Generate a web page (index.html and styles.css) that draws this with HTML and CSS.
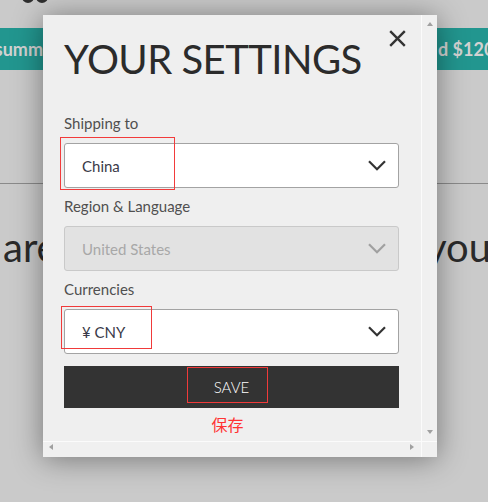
FILE: index.html
```html
<!DOCTYPE html>
<html lang="en">
<head>
<meta charset="utf-8">
<title>Your settings</title>
<link rel="stylesheet" href="styles.css">
</head>
<body>
<div class="page">
  <header class="topbar">
    <svg class="logo" width="26" height="12" viewBox="0 0 26 12">
      <ellipse cx="6" cy="4" rx="4.5" ry="4.5" fill="none" stroke="#2e2e2e" stroke-width="3"/>
      <ellipse cx="20" cy="4" rx="4.5" ry="4.5" fill="none" stroke="#2e2e2e" stroke-width="3"/>
      <path d="M10 5 H16" stroke="#2e2e2e" stroke-width="3"/>
    </svg>
  </header>
  <div class="promo">
    <div class="cell cell-left"><span>summ</span></div>
    <div class="cell"></div>
    <div class="cell cell-right"><span>d $120</span></div>
  </div>
  <div class="rule"></div>
  <div class="hero">
    <div class="cell hero-left"><span>are</span></div>
    <div class="cell"></div>
    <div class="cell hero-right"><span>your</span></div>
  </div>
</div>

<div class="modal">
  <div class="modal-body">
    <div class="modal-head">
      <h1 class="title">YOUR SETTINGS</h1>
      <button class="close" aria-label="Close">
        <svg width="17" height="17" viewBox="0 0 17 17">
          <path d="M1.2 1.2 L15.8 15.8 M15.8 1.2 L1.2 15.8" stroke="#333" stroke-width="2.4" fill="none"/>
        </svg>
      </button>
    </div>

    <div class="field field-first">
      <div class="label">Shipping to</div>
      <div class="select">
        <span>China</span>
        <svg class="chev" width="18" height="11" viewBox="0 0 18 11"><path d="M1 1.3 L9 9.3 L17 1.3" fill="none" stroke="#333" stroke-width="2.2"/></svg>
        <span class="mark mark-ship"></span>
      </div>
    </div>

    <div class="field">
      <div class="label">Region &amp; Language</div>
      <div class="select select-disabled">
        <span>United States</span>
        <svg class="chev" width="18" height="11" viewBox="0 0 18 11"><path d="M1 1.3 L9 9.3 L17 1.3" fill="none" stroke="#a0a0a0" stroke-width="2.2"/></svg>
      </div>
    </div>

    <div class="field">
      <div class="label">Currencies</div>
      <div class="select">
        <span>¥ CNY</span>
        <svg class="chev" width="18" height="11" viewBox="0 0 18 11"><path d="M1 1.3 L9 9.3 L17 1.3" fill="none" stroke="#333" stroke-width="2.2"/></svg>
        <span class="mark mark-cur"></span>
      </div>
    </div>

    <div class="save-wrap">
      <button class="save">SAVE</button>
      <div class="note">
        <span class="note-box"></span>
        <span class="note-text">保存</span>
      </div>
    </div>
  </div>
  <div class="vscroll"><i class="arr arr-up"></i><i class="arr arr-down"></i></div>
  <div class="hscroll"><i class="arr arr-left"></i><i class="arr arr-right"></i></div>
  <div class="corner"></div>
</div>
</body>
</html>
```

FILE: styles.css
```css
* { box-sizing: border-box; }

html, body {
  margin: 0;
  padding: 0;
}

body {
  width: 488px;
  height: 502px;
  overflow: hidden;
  background: #cacaca;
  font-family: Lato, "Noto Sans", sans-serif;
  font-weight: 400;
  position: relative;
}

/* ---------- page behind the overlay ---------- */
.page {
  width: 488px;
}

.topbar {
  height: 28px;
  padding-left: 22px;
  overflow: hidden;
}

.logo {
  display: block;
  margin-top: -7px;
}

.promo {
  height: 42px;
  background: #22968f;
  display: grid;
  grid-template-columns: 43px 1fr 51px;
  color: #d2d2d2;
  font-weight: 700;
  font-size: 18px;
  line-height: 42px;
}

.cell {
  overflow: hidden;
  white-space: nowrap;
  display: flex;
}

.cell-left {
  justify-content: flex-end;
}

.cell-right {
  padding-left: 1px;
}

.rule {
  margin-top: 113px;
  border-top: 1px solid #8a8a8a;
}

.hero {
  margin-top: 39px;
  display: grid;
  grid-template-columns: 43px 1fr 51px;
  font-size: 40px;
  line-height: 48px;
  color: #2a2a2a;
}

.hero-left {
  padding-left: 3px;
}

.hero-right span {
  margin-left: -11px;
}

/* ---------- modal ---------- */
.modal {
  position: absolute;
  left: 43px;
  top: 15px;
  width: 394px;
  height: 442px;
  background: #efefef;
  display: grid;
  grid-template-columns: 1fr 16px;
  grid-template-rows: 1fr 16px;
  box-shadow: 0 2px 28px rgba(0, 0, 0, 0.42);
}

.modal-body {
  padding: 20px 22px 0 21px;
  overflow: hidden;
}

.modal-head {
  display: flex;
  justify-content: space-between;
  align-items: flex-start;
}

.title {
  margin: 0;
  font-size: 40px;
  line-height: 48px;
  font-weight: 400;
  letter-spacing: -0.55px;
  color: #2b2b2b;
  white-space: nowrap;
}

.close {
  margin: -5px -7px 0 0;
  padding: 0;
  border: 0;
  background: none;
  width: 17px;
  height: 17px;
}

.close svg {
  display: block;
}

.field {
  margin-bottom: 9px;
}

.field-first {
  margin-top: 31px;
}

.label {
  font-size: 15px;
  line-height: 18px;
  color: #505050;
  margin-bottom: 11px;
}

.select {
  position: relative;
  height: 45px;
  background: #fff;
  border: 1px solid #a3a3a3;
  border-radius: 3px;
  display: flex;
  align-items: center;
  justify-content: space-between;
  padding: 0 12px 0 17px;
  font-size: 15px;
  color: #3a3a48;
}

.select-disabled {
  background: #e2e2e2;
  border-color: #c9c9c9;
  color: #a8a8a8;
}

.chev {
  display: block;
}

.mark {
  position: absolute;
  z-index: 1;
  border: 1px solid #f03a3a;
}

.mark-ship {
  left: -5px;
  top: -7px;
  width: 115px;
  height: 53px;
  border-color: #f23b3b;
}

.mark-cur {
  left: -4px;
  top: -4px;
  width: 91px;
  height: 43px;
}

.save-wrap {
  position: relative;
  margin-top: 12px;
}

.save {
  display: block;
  width: 100%;
  height: 42px;
  border: 0;
  padding: 0;
  background: #333;
  color: #fff;
  font-family: Lato, "Noto Sans", sans-serif;
  font-weight: 300;
  font-size: 15px;
}

.note {
  position: absolute;
  left: 123px;
  top: 1px;
  display: flex;
  flex-direction: column;
  align-items: center;
}

.note-box {
  width: 81px;
  height: 36px;
  border: 1px solid #f03a3a;
}

.note-text {
  margin-top: 13px;
  font-family: "Noto Sans CJK SC", sans-serif;
  font-weight: 400;
  font-size: 16px;
  line-height: 16px;
  color: #ff3333;
}

/* ---------- scrollbars ---------- */
.vscroll {
  background: #f0f0f0;
  border-left: 1px solid #fbfbfb;
  display: flex;
  flex-direction: column;
  justify-content: space-between;
  align-items: center;
  padding: 7px 0;
}

.hscroll {
  background: #f0f0f0;
  border-top: 1px solid #fbfbfb;
  display: flex;
  justify-content: space-between;
  align-items: flex-start;
  padding: 2px 7px 0 6px;
}

.corner {
  background: #f0f0f0;
  border-top: 1px solid #fbfbfb;
  border-left: 1px solid #fbfbfb;
}

.arr {
  display: block;
  width: 0;
  height: 0;
}

.arr-up {
  border-left: 3.5px solid transparent;
  border-right: 3.5px solid transparent;
  border-bottom: 4px solid #a0a0a0;
}

.arr-down {
  border-left: 3.5px solid transparent;
  border-right: 3.5px solid transparent;
  border-top: 4px solid #a0a0a0;
}

.arr-left {
  border-top: 3.5px solid transparent;
  border-bottom: 3.5px solid transparent;
  border-right: 4px solid #a0a0a0;
}

.arr-right {
  border-top: 3.5px solid transparent;
  border-bottom: 3.5px solid transparent;
  border-left: 4px solid #a0a0a0;
}
```
